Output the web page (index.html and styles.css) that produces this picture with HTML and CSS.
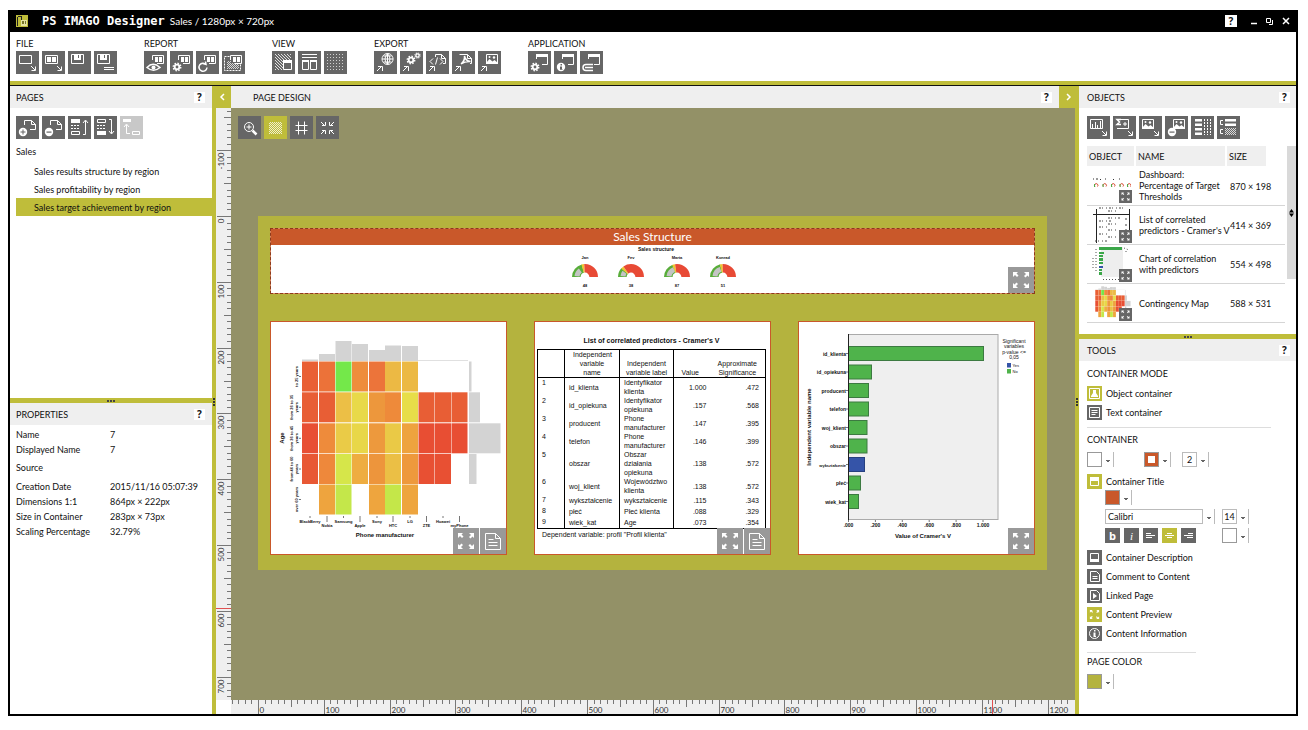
FILE: index.html
```html
<!DOCTYPE html>
<html lang="en">
<head>
<meta charset="utf-8">
<title>PS IMAGO Designer</title>
<link rel="stylesheet" href="styles.css">
</head>
<body>
<svg class="defs" aria-hidden="true">
  <symbol id="expand" viewBox="0 0 26 26"><path class="w" d="M5 5h5l-1.500 1.500 2 2-1.500 1.500-2-2L5 10zM21 5v5l-1.500-1.500-2 2-1.500-1.500 2-2L16 5zM5 21v-5l1.500 1.500 2-2 1.500 1.500-2 2L10 21zM21 21h-5l1.500-1.500-2-2 1.500-1.500 2 2L21 16z"/></symbol>
  <symbol id="note" viewBox="0 0 26 26"><path class="s" d="M5.500 5.500h10l5 5v11h-15zM15.500 5.500v5h5M8.500 11.500h5M8.500 14.500h9M8.500 17.500h9"/></symbol>
  <symbol id="in" viewBox="0 0 23 23"><path class="s" d="M15 15l4 4M19.500 15.500v4h-4"/></symbol>
  <symbol id="out" viewBox="0 0 23 23"><path class="s" d="M3 20l5-5M4 15.500h4.500V20"/></symbol>
  <symbol id="win" viewBox="0 0 23 23"><path class="s" d="M8.500 9V4.500h11v8H13"/><path class="w" d="M11 6h3v5h-3zM15 6h3v5h-3z"/></symbol>
  <symbol id="app" viewBox="0 0 23 23"><path class="s" d="M8.500 8V4.500h11v9H14"/><path class="w" d="M8 3h12v3H8z"/></symbol>
  <symbol id="gear" viewBox="0 0 10 10"><circle class="w" cx="5" cy="5" r="3.200"/><circle class="s d" cx="5" cy="5" r="3.700"/><circle class="k" cx="5" cy="5" r="1.400"/></symbol>
  <symbol id="pic" viewBox="0 0 23 23"><path class="s" d="M8.500 3.500h11v9h-11z"/><path class="w" d="M8 12l3.500-4 3 2.500 2-1.500 3.500 3v1H8z"/><circle class="w" cx="11.500" cy="6" r="1"/><circle class="w" cx="16" cy="6.500" r="1.200"/></symbol>
  <symbol id="page" viewBox="0 0 23 23"><path class="s" d="M8.500 9V4.500h7l4 4v5H14M15.500 4.500v4h4"/></symbol>
  <pattern id="hatch" width="3" height="3" patternUnits="userSpaceOnUse"><path d="M0 0l3 3" stroke="#fff" stroke-width=".8"/></pattern>
  <pattern id="check" width="2" height="2" patternUnits="userSpaceOnUse"><path d="M0 0h1v1H0zM1 1h1v1H1z" fill="#fff" opacity=".75"/></pattern>
  <pattern id="dots" width="3" height="3" patternUnits="userSpaceOnUse"><path d="M0 0h1v1H0z" fill="#fff"/></pattern>
</svg>

<div class="window">
  <header class="titlebar">
    <svg class="logo" viewBox="0 0 12 12"><path fill="#bfbd3a" d="M0 0h12v12H0z"/><path fill="#222" d="M1 2h1v9H1zM2 1h4v1H2zM5 2h1v3H5z"/><path fill="#e4e3a0" d="M5 5h6v6H5z"/><path fill="#77752a" d="M6 6h2v3H6zM9 6h1v3H9z"/></svg>
    <h1 class="brand">PS IMAGO Designer</h1>
    <span class="doc">Sales / 1280px × 720px</span>
    <button class="help">?</button>
    <div class="winbtns">
      <button aria-label="Minimize"><svg viewBox="0 0 8 8"><path class="s b" d="M1 6.500h6"/></svg></button>
      <button aria-label="Restore"><svg viewBox="0 0 8 8"><path class="s" d="M.5 1.500h4v4h-4zM6.500 3v4.500H3"/></svg></button>
      <button aria-label="Close"><svg viewBox="0 0 8 8"><path class="s b" d="M1 1l6 6M7 1L1 7"/></svg></button>
    </div>
  </header>

  <nav class="toolbar">
    <section class="group"><h2>FILE</h2><div class="icons">
      <button class="ic" aria-label="New"><svg viewBox="0 0 23 23"><path class="s" d="M3.500 4.500h12v8h-12z"/><use href="#in"/></svg></button>
      <button class="ic" aria-label="Open"><svg viewBox="0 0 23 23"><path class="s" d="M3.500 4.500h12v8h-12z"/><path class="w" d="M5 6h4v5H5zM10 6h4v5h-4z"/><use href="#in"/></svg></button>
      <button class="ic" aria-label="Save"><svg viewBox="0 0 23 23"><path class="s" d="M3.500 3.500h12v9h-12z"/><path class="w" d="M6 3h7v6H6z"/><path class="k" d="M10 4h1v3h-1z"/></svg></button>
      <button class="ic" aria-label="Save as"><svg viewBox="0 0 23 23"><path class="s" d="M3.500 3.500h12v9h-12zM10 16.500h10M10 18.500h10"/><path class="w" d="M6 3h7v6H6z"/><path class="k" d="M10 4h1v3h-1z"/></svg></button>
    </div></section>
    <section class="group"><h2>REPORT</h2><div class="icons">
      <button class="ic" aria-label="Preview"><svg viewBox="0 0 23 23"><use href="#win"/><path class="k" d="M2 16q8-8 15 0z"/><path class="s b" d="M3 16.500q6-6.500 13 0q-6.500 5.500-13 0z"/><circle class="w" cx="9.500" cy="16.500" r="2"/></svg></button>
      <button class="ic" aria-label="Report settings"><svg viewBox="0 0 23 23"><use href="#win"/><use href="#gear" x="2" y="11" width="10" height="10"/></svg></button>
      <button class="ic" aria-label="Refresh"><svg viewBox="0 0 23 23"><use href="#win"/><path class="s b" d="M10 13.500a4 4 0 1 0 1 3M7 12.500l3 1-.5-3"/></svg></button>
      <button class="ic" aria-label="Select"><svg viewBox="0 0 23 23"><path class="s dash" d="M2.500 5.500h16v14h-16z"/><path fill="url(#check)" d="M5 10h12v8H5z"/><path class="k" d="M9 5h10v7H9z"/><use href="#win"/></svg></button>
    </div></section>
    <section class="group"><h2>VIEW</h2><div class="icons">
      <button class="ic" aria-label="Background"><svg viewBox="0 0 23 23"><path fill="url(#hatch)" d="M3 3h16v16H3z"/><path class="s kf" d="M11.500 9.500h8v9h-8z"/><path class="w" d="M11 9h9v3h-9z"/></svg></button>
      <button class="ic" aria-label="Layout"><svg viewBox="0 0 23 23"><path class="s" d="M4 3.500h15M4 6.500h15M4.500 9.500h6v9h-6zM12.500 9.500h6v9h-6z"/><path class="w" d="M4 9h7v2H4zM12 9h7v2h-7z"/></svg></button>
      <button class="ic" aria-label="Grid"><svg viewBox="0 0 23 23"><path fill="url(#dots)" opacity=".7" d="M3 3h17v17H3z"/></svg></button>
    </div></section>
    <section class="group"><h2>EXPORT</h2><div class="icons">
      <button class="ic" aria-label="Export HTML"><svg viewBox="0 0 23 23"><use href="#out"/><path class="s" d="M13.500 2.500a5.500 5.500 0 1 0 .1 0zM13.500 3v10M8 8h11M9.500 5h8M9.500 11h8M13.500 2.500q-5 5.500 0 11q5-5.500 0-11"/></svg></button>
      <button class="ic" aria-label="Export settings"><svg viewBox="0 0 23 23"><use href="#out"/><use href="#gear" x="6" y="4" width="10" height="10"/><use href="#gear" x="14" y="1" width="7" height="7"/></svg></button>
      <button class="ic" aria-label="Export code"><svg viewBox="0 0 23 23"><use href="#out"/><path class="s" d="M9.500 6V3.500h6l4 4v5H17M15.500 3.500v4h4M7 7.500l-3 3 3 3M11.500 6.500l-2 7M14 7.500l3 3-3 3"/></svg></button>
      <button class="ic" aria-label="Export PDF"><svg viewBox="0 0 23 23"><use href="#out"/><path class="s" d="M7.500 3.500h8l4 4v5H18M15.500 3.500v4h4"/><path class="s b" d="M9 13q4-3 3.500-8q1 5 6 5.500q-5-.5-9.500 2.500"/></svg></button>
      <button class="ic" aria-label="Export image"><svg viewBox="0 0 23 23"><use href="#out"/><use href="#pic"/></svg></button>
    </div></section>
    <section class="group"><h2>APPLICATION</h2><div class="icons">
      <button class="ic" aria-label="Options"><svg viewBox="0 0 23 23"><use href="#app"/><use href="#gear" x="2" y="11" width="10" height="10"/></svg></button>
      <button class="ic" aria-label="About"><svg viewBox="0 0 23 23"><use href="#app"/><circle class="w" cx="7" cy="16" r="4.200"/><path class="k" d="M6.500 13h1.500v1.500H6.500zM6 15.500h2v2.500h.5v.8H6z"/></svg></button>
      <button class="ic" aria-label="Close application"><svg viewBox="0 0 23 23"><use href="#app"/><path class="s b" d="M13 13.500H6a3 3 0 0 0 0 6h7M5 16.500h8"/></svg></button>
    </div></section>
  </nav>

  <div class="body">
    <aside class="left">
      <section class="pages">
        <header class="phead"><h2>PAGES</h2><button class="help">?</button></header>
        <div class="icons pad">
          <button class="ic" aria-label="Add page"><svg viewBox="0 0 23 23"><use href="#page"/><circle class="w" cx="7" cy="16" r="4.200"/><path class="k" d="M6.500 13.500h1v2h2v1h-2v2h-1v-2h-2v-1h2z"/></svg></button>
          <button class="ic" aria-label="Remove page"><svg viewBox="0 0 23 23"><use href="#page"/><circle class="w" cx="7" cy="16" r="4.200"/><path class="k" d="M4.500 15.500h5v1.200h-5z"/></svg></button>
          <button class="ic" aria-label="Move up"><svg viewBox="0 0 23 23"><path class="w" d="M3 3h9v4H3z"/><path class="s dash" d="M3 9.500h9M3 12.500h9"/><path class="s" d="M3.500 15.500h8v3h-8zM15 18.500h2.500v-14M15 7l2.500-3L20 7"/></svg></button>
          <button class="ic" aria-label="Move down"><svg viewBox="0 0 23 23"><path class="w" d="M3 15h9v4H3z"/><path class="s dash" d="M3 9.500h9M3 12.500h9"/><path class="s" d="M3.500 3.500h8v3h-8zM15 3.500h2.500v14M15 15l2.500 3 2.500-3"/></svg></button>
          <button class="ic off" disabled aria-label="Move level"><svg viewBox="0 0 23 23"><path class="w" d="M3 3h8v3H3z"/><path class="s" d="M10 17.500H6.500V9M4 11l2.500-3L9 11M12.500 15.500h7v3h-7z"/></svg></button>
        </div>
        <ul class="tree">
          <li>Sales</li>
          <li class="sub">Sales results structure by region</li>
          <li class="sub">Sales profitability by region</li>
          <li class="sub on">Sales target achievement by region</li>
        </ul>
      </section>
      <div class="split"><i class="grip"></i></div>
      <section class="props">
        <header class="phead"><h2>PROPERTIES</h2><button class="help">?</button></header>
        <dl>
          <dt>Name</dt><dd>7</dd>
          <dt>Displayed Name</dt><dd>7</dd>
          <dt class="tall">Source</dt><dd></dd>
          <dt>Creation Date</dt><dd>2015/11/16 05:07:39</dd>
          <dt>Dimensions 1:1</dt><dd>864px × 222px</dd>
          <dt>Size in Container</dt><dd>283px × 73px</dd>
          <dt>Scaling Percentage</dt><dd>32.79%</dd>
        </dl>
      </section>
    </aside>

    <main class="center">
      <header class="phead">
        <button class="tab" aria-label="Collapse left"><svg viewBox="0 0 8 8"><path class="s b" d="M6 1L3 4l3 3"/></svg></button>
        <h2>PAGE DESIGN</h2><button class="help">?</button>
        <button class="tab" aria-label="Collapse right"><svg viewBox="0 0 8 8"><path class="s b" d="M2 1l3 3-3 3"/></svg></button>
      </header>
      <div class="work">
        <div class="vsplit"><i class="grip v"></i></div>
        <svg class="vruler"></svg>
        <div class="stagecol">
          <div class="stage">
            <div class="icons">
              <button class="ic" aria-label="Zoom"><svg viewBox="0 0 23 23"><circle class="s" cx="11" cy="11" r="4.500"/><path class="s" d="M11 8.500v5M8.500 11h5"/><path class="s bb" d="M14.500 14.500l4 4"/></svg></button>
              <button class="ic on" aria-label="Pattern"><svg viewBox="0 0 23 23"><path fill="url(#check)" d="M5 6h13v12H5z"/></svg></button>
              <button class="ic" aria-label="Snap to grid"><svg viewBox="0 0 23 23"><path class="s" d="M8.500 5.500v13M14.500 5.500v13M5.500 9.500h12M5.500 14.500h12"/></svg></button>
              <button class="ic" aria-label="Fit"><svg viewBox="0 0 23 23"><path class="s" d="M5 6l3.500 3.500M9.500 6v3.500H6M18 6l-3.500 3.500M13.500 6v3.500H17M5 18l3.500-3.500M9.500 18v-3.500H6M18 18l-3.500-3.500M13.500 18v-3.500H17"/></svg></button>
            </div>
            <div class="sheet">
              <section class="dash-card">
                <h3>Sales Structure</h3>
                <svg class="gauges" viewBox="271 245 763 48" id="gauges"></svg>
                <div class="tags"><button class="tag" aria-label="Preview"><svg><use href="#expand"/></svg></button></div>
              </section>
              <div class="cards">
                <section class="card"><svg class="chart" viewBox="271 321 235 232" id="heat"></svg>
                  <div class="tags"><button class="tag" aria-label="Preview"><svg><use href="#expand"/></svg></button><button class="tag" aria-label="Comment"><svg><use href="#note"/></svg></button></div></section>
                <section class="card tcard">
                  <table class="pred">
                    <caption>List of correlated predictors - Cramer's V</caption>
                    <thead><tr><th></th><th>Independent variable name</th><th>Independent variable label</th><th>Value</th><th>Approximate Significance</th></tr></thead>
                    <tbody>
                      <tr><td>1</td><td>id_klienta</td><td>Identyfikator klienta</td><td>1.000</td><td>.472</td></tr>
                      <tr><td>2</td><td>id_opiekuna</td><td>Identyfikator opiekuna</td><td>.157</td><td>.568</td></tr>
                      <tr><td>3</td><td>producent</td><td>Phone manufacturer</td><td>.147</td><td>.395</td></tr>
                      <tr><td>4</td><td>telefon</td><td>Phone manufacturer</td><td>.146</td><td>.399</td></tr>
                      <tr><td>5</td><td>obszar</td><td>Obszar działania opiekuna</td><td>.138</td><td>.572</td></tr>
                      <tr><td>6</td><td>woj_klient</td><td>Województwo klienta</td><td>.138</td><td>.572</td></tr>
                      <tr><td>7</td><td>wykształcenie</td><td>wykształcenie</td><td>.115</td><td>.343</td></tr>
                      <tr><td>8</td><td>płeć</td><td>Płeć klienta</td><td>.088</td><td>.329</td></tr>
                      <tr><td>9</td><td>wiek_kat</td><td>Age</td><td>.073</td><td>.354</td></tr>
                    </tbody>
                  </table>
                  <p class="foot">Dependent variable: profil "Profil klienta"</p>
                  <div class="tags"><button class="tag" aria-label="Preview"><svg><use href="#expand"/></svg></button><button class="tag" aria-label="Comment"><svg><use href="#note"/></svg></button></div></section>
                <section class="card"><svg class="chart" viewBox="798 321 235 232" id="bars"></svg>
                  <div class="tags"><button class="tag" aria-label="Preview"><svg><use href="#expand"/></svg></button></div></section>
              </div>
            </div>
          </div>
          <svg class="hruler"></svg>
        </div>
        <div class="vsplit"><i class="grip v"></i></div>
      </div>
    </main>

    <aside class="right">
      <section class="objects">
        <header class="phead"><h2>OBJECTS</h2><button class="help">?</button></header>
        <div class="icons pad">
          <button class="ic" aria-label="Add chart"><svg viewBox="0 0 23 23"><path class="s" d="M3.500 3.500h12v9h-12z"/><path class="w" d="M5 8h1v4H5zM8 6h1v6H8zM10 9h1v3h-1zM13 5h1v7h-1z"/><use href="#in"/></svg></button>
          <button class="ic" aria-label="Add statistic"><svg viewBox="0 0 23 23"><path class="s" d="M8 3.500h7.500v9H4M10 8h4M12 6v4"/><path class="s b" d="M8 3.500H4l2.500 2.500L4 8.500h4"/><use href="#in"/></svg></button>
          <button class="ic" aria-label="Add image"><svg viewBox="0 0 23 23"><use href="#pic" x="-5"/><use href="#in"/></svg></button>
          <button class="ic" aria-label="Remove image"><svg viewBox="0 0 23 23"><use href="#pic"/><circle class="w" cx="7" cy="16" r="4.200"/><path class="k" d="M4.500 15.500h5v1.200h-5z"/></svg></button>
          <button class="ic" aria-label="List view"><svg viewBox="0 0 23 23"><path class="w" d="M4 3h7v2.500H4zM4 7.500h7V10H4zM4 12h7v2.500H4zM4 16.500h7V19H4z"/><path class="s dash" d="M13.500 3v16M16.500 3v16M19.500 3v16"/></svg></button>
          <button class="ic" aria-label="Group view"><svg viewBox="0 0 23 23"><path class="w" d="M8 3h11v2.500H8zM8 7.500h11V10H8z"/><path class="s" d="M6 4.500H3.500v4H6M6 13.500H3.500v4H6"/><path fill="url(#check)" d="M8 12h11v7H8z"/></svg></button>
        </div>
        <div class="list">
          <table class="objs">
            <thead><tr><th>OBJECT</th><th>NAME</th><th>SIZE</th><th></th></tr></thead>
            <tbody>
              <tr><td><div class="thumb"><svg viewBox="0 0 40 36"><path d="M2 12h1M5 12h2M9 12.500h1M14 12h1M22 12.500h1M28 12h1" stroke="#333"/><g fill="none" stroke="#d84a30"><path d="M4 19.500a1.700 1.700 0 1 1 2.500 0M12.500 19.500a1.700 1.700 0 1 1 2.500 0M21 19.500a1.700 1.700 0 1 1 2.500 0M29.500 19.500a1.700 1.700 0 1 1 2.500 0M37 19.500a1.700 1.700 0 1 1 2.500 0"/></g><path d="M3.500 17v3M12 17v3M20.500 17v3M29 17v3M36.500 17v3" stroke="#4bae46"/></svg><button class="mini" aria-label="Preview"><svg><use href="#expand"/></svg></button></div></td><td>Dashboard:<br>Percentage of Target<br>Thresholds</td><td>870 × 198</td><td></td></tr>
              <tr><td><div class="thumb"><svg viewBox="0 0 40 36"><path d="M5.500 2v34M38.500 2v26M2 7.500h37" stroke="#222"/><g stroke="#444" stroke-dasharray="2 1 1 3 1 2"><path d="M8 1h24M17 4h9M17 11h13M8 14h12M17 17h8M8 20h10M17 23h8M8 27h10M17 30h9M4 34h12M34 12h3M34 18h3M34 23h3"/></g></svg><button class="mini" aria-label="Preview"><svg><use href="#expand"/></svg></button></div></td><td>List of correlated<br>predictors - Cramer's V</td><td>414 × 369</td><td></td></tr>
              <tr><td><div class="thumb"><svg viewBox="0 0 40 36"><path fill="#eee" d="M10 1h22v30H10z"/><path fill="#3aa648" d="M8 1h23v3H8zM8 6h5v2H8zM8 9h4v2H8zM8 12h4v3H8zM8 16h4v2H8zM8 23h3v2H8zM8 26h3v3H8z"/><path fill="#3554a8" d="M8 20h4v2H8z"/><path stroke="#555" stroke-dasharray="1 2" d="M2 12v10M5 3v24M12 33.500h18M33 2l5 2M35 5v3"/></svg><button class="mini" aria-label="Preview"><svg><use href="#expand"/></svg></button></div></td><td>Chart of correlation<br>with predictors</td><td>554 × 498</td><td></td></tr>
              <tr><td><div class="thumb"><svg viewBox="278 334 225 200" id="heatThumb"></svg><button class="mini" aria-label="Preview"><svg><use href="#expand"/></svg></button></div></td><td>Contingency Map</td><td>588 × 531</td><td></td></tr>
            </tbody>
          </table>
          <div class="bar"><div class="knob"><svg viewBox="0 0 5 8"><path d="M0 3.500L2.500 0 5 3.500zM0 4.500h5L2.500 8z"/></svg></div></div>
        </div>
      </section>
      <div class="split"><i class="grip"></i></div>
      <section class="tools">
        <header class="phead"><h2>TOOLS</h2><button class="help">?</button></header>
        <div class="tbody">
          <h3>CONTAINER MODE</h3>
          <button class="row"><span class="sq on"><svg viewBox="0 0 15 15"><path class="s" d="M2.500 2.500h10v10h-10z"/><path class="w" d="M6 4h3v3l2 3v1H4v-1l2-3z"/></svg></span>Object container</button>
          <button class="row"><span class="sq"><svg viewBox="0 0 15 15"><path class="s" d="M2.500 2.500h10v10h-10zM4.500 5.500h6M4.500 7.500h6M4.500 9.500h4"/></svg></span>Text container</button>
          <hr>
          <h3>CONTAINER</h3>
          <div class="line">
            <button class="sw white" aria-label="Fill"></button><i class="caret"></i>
            <button class="sw border-sw" aria-label="Border color"></button><i class="caret"></i>
            <select class="num" aria-label="Border width"><option>2</option></select><i class="caret"></i>
          </div>
          <button class="row"><span class="sq on"><svg viewBox="0 0 15 15"><path class="s" d="M3.500 3.500h8v8h-8z"/><path class="w" d="M3 3h9v4H3z"/></svg></span>Container Title</button>
          <div class="line in"><button class="sw orange" aria-label="Title color"></button><i class="caret"></i></div>
          <div class="line in font"><select class="face" aria-label="Font"><option>Calibri</option></select><i class="caret"></i><select class="num" aria-label="Font size"><option>14</option></select><i class="caret"></i></div>
          <div class="line in fmt">
            <button class="sq b">b</button><button class="sq i">i</button>
            <button class="sq" aria-label="Left"><svg viewBox="0 0 15 15"><path class="s" d="M3 5.500h5M3 7.500h9M3 9.500h6"/></svg></button>
            <button class="sq on" aria-label="Center"><svg viewBox="0 0 15 15"><path class="s" d="M5 5.500h5M3 7.500h9M5 9.500h5"/></svg></button>
            <button class="sq" aria-label="Right"><svg viewBox="0 0 15 15"><path class="s" d="M7 5.500h5M3 7.500h9M6 9.500h6"/></svg></button>
            <button class="sw white" aria-label="Text color"></button><i class="caret"></i>
          </div>
          <button class="row"><span class="sq"><svg viewBox="0 0 15 15"><path class="s" d="M3.500 3.500h8v8h-8z"/><path class="w" d="M3 9h9v3H3z"/></svg></span>Container Description</button>
          <button class="row"><span class="sq"><svg viewBox="0 0 15 15"><path class="s" d="M3.500 2.500h6l3 3v7h-9zM5.500 7.500h5M5.500 9.500h5"/></svg></span>Comment to Content</button>
          <button class="row"><span class="sq"><svg viewBox="0 0 15 15"><path class="s" d="M3.500 2.500h6l3 3v7h-9z"/><path class="w" d="M6 5l4 3-4 3z"/></svg></span>Linked Page</button>
          <button class="row"><span class="sq on"><svg><use href="#expand"/></svg></span>Content Preview</button>
          <button class="row"><span class="sq"><svg viewBox="0 0 15 15"><circle class="s" cx="7.500" cy="7.500" r="5"/><path class="w" d="M7 4h1.500v1.500H7zM6.500 6.500h2V10H9v1H6.500z"/></svg></span>Content Information</button>
          <hr class="short">
          <h3>PAGE COLOR</h3>
          <div class="line"><button class="sw olive" aria-label="Page color"></button><i class="caret"></i></div>
        </div>
      </section>
    </aside>
  </div>
</div>
<script src="script.js"></script>
</body>
</html>
```
FILE: styles.css
```css
* { box-sizing: border-box; margin: 0; padding: 0; }
body { background: #fff; color: #111; font: 9px/12px "Lato", sans-serif; }
button, select { font: inherit; color: inherit; background: none; border: 0; appearance: none; }
h1, h2, h3 { font: inherit; }
ul { list-style: none; }
svg { display: block; width: 100%; height: 100%; }
.defs { position: absolute; width: 0; height: 0; }

.w { fill: #fff; }
.k { fill: #666; }
.s { fill: none; stroke: #fff; stroke-width: 1; }
.kf { fill: #666; }
.b { stroke-width: 1.5; }
.bb { stroke-width: 2.5; }
.d { stroke-width: 1.5; stroke-dasharray: 1.5 1.4; }
.dash { stroke-dasharray: 2 1; }

.window { display: flex; flex-direction: column; min-height: calc(100vh - 24px); margin: 10px 10px 14px 8px; border: solid #000; border-width: 0 2px 2px; }
.titlebar { display: flex; align-items: center; height: 22px; margin: 0 -2px; padding: 0 8px; background: #000; color: #fff; }
.logo { width: 12px; height: 12px; }
.brand { margin: 0 5px 0 14px; font: bold 12px/16px "DejaVu Sans Mono", monospace; }
.doc { font-size: 10px; }
.help { width: 11px; height: 11px; background: #fff; color: #111; font: bold 10px/11px "Open Sans", sans-serif; text-align: center; }
.titlebar .help { width: 12px; height: 12px; margin-left: auto; }
.winbtns { display: flex; gap: 8px; margin-left: 13px; }
.winbtns button { width: 8px; height: 8px; }

.toolbar { display: flex; gap: 27px; padding: 5px 6px 6px; border-bottom: 1px solid #111; box-shadow: inset 0 -4px #bfbd3a; height: 54px; }
.group h2 { line-height: 14px; white-space: nowrap; }
.icons { display: flex; gap: 3px; }
.ic { flex: none; width: 23px; height: 23px; background: #666; }
.ic.on { background: #bfbd3a; }
.ic.off { background: #c8c8c8; }
.icons.pad { padding: 8px 6px; }

.body { flex: 1; display: flex; }
.left { flex: 0 0 202px; display: flex; flex-direction: column; }
.center { flex: 1; min-width: 0; display: flex; flex-direction: column; }
.right { flex: 0 0 217px; display: flex; flex-direction: column; }
.phead { display: flex; align-items: center; height: 22px; flex: none; padding: 0 7px 0 6px; background: #efefef; }
.phead h2 { padding-top: 2px; }
.phead .help { margin-left: auto; }
.right .phead { padding: 0 6px 0 8px; }
.right .icons.pad { padding: 8px; }
.pages { flex: 1; }
.props { height: 311px; }
.split, .vsplit { flex: none; display: flex; align-items: center; justify-content: center; background: #bfbd3a; }
.split { height: 5px; }
.vsplit { width: 4px; }
.grip { width: 8px; height: 2px; background: repeating-linear-gradient(90deg, #444 0 2px, transparent 2px 3px); }
.grip.v { width: 2px; height: 8px; margin-bottom: 18px; background: repeating-linear-gradient(#333 0 2px, transparent 2px 3px); }

.tree li { margin-left: 6px; line-height: 17px; }
.tree .sub { height: 18px; padding-left: 18px; line-height: 19px; }
.tree li:first-child { height: 19px; margin-top: -4px; }
.tree .on { background: #bfbd3a; }
.props dl { display: grid; grid-template-columns: 94px 1fr; padding: 2px 6px; line-height: 15px; }
.props .tall { line-height: 22px; }

.center .phead { padding: 0; }
.center h2 { margin-left: 22px; }
.tab { display: flex; align-items: center; justify-content: center; width: 19px; height: 22px; background: #bfbd3a; }
.tab svg { width: 8px; height: 8px; }
.center .help + .tab { width: 20px; margin-left: 7px; }
.work { flex: 1; display: flex; }
.vruler { flex: none; width: 15px; height: auto; margin-bottom: 14px; background: #efefef; }
.hruler { flex: none; height: 14px; background: #efefef; }
.tick { stroke: #777; stroke-width: 1; }
.mark { stroke: #e05050; stroke-width: 1; }
.rlabel { font-size: 8px; fill: #333; }
.stagecol { flex: 1; min-width: 0; display: flex; flex-direction: column; }
.stage { flex: 1; padding: 8px 7px; background: #939167; }
.sheet { margin: 77px 21px 0 20px; padding: 12px; background: #b4b33e; }
.dash-card { position: relative; border: 1px dashed #8c3a1c; background: #d9875f; }
.dash-card h3 { height: 16px; background: #c9582a; color: #fff; font-size: 12px; line-height: 16px; text-align: center; }
.gauges { height: auto; background: #fff; }
.cards { display: grid; grid-template-columns: repeat(3, 1fr); gap: 27px; padding: 27px 0 3px; }
.card { position: relative; min-width: 0; border: 1px solid #c9582a; background: #fff; }
.chart { height: auto; }
.tags { position: absolute; right: 0; bottom: 0; display: flex; gap: 1px; }
.tag { width: 26px; height: 26px; background: #999; }
.gauges text, .chart text { font-family: "Liberation Sans", sans-serif; fill: #111; }

.tcard { padding: 14px 4px 0 2px; font: 7px/9px "Liberation Sans", sans-serif; }
.pred { width: 100%; border-collapse: collapse; table-layout: fixed; border: 1px solid #000; }
.pred caption { padding-bottom: 4px; font-weight: bold; }
.pred th, .pred td { padding: 0 4px; font-weight: normal; border-right: 1px solid #000; text-align: left; }
.pred th { height: 28px; padding: 0 8px; vertical-align: bottom; text-align: center; border-bottom: 1px solid #000; }
.pred td { height: 11px; }
.pred th:nth-child(1) { width: 27px; }
.pred th:nth-child(2) { width: 55px; }
.pred th:nth-child(3) { width: 54px; padding: 0 2px; }
.pred th:nth-child(4) { width: 36px; }
.pred td:nth-child(1) { vertical-align: top; }
.pred td:nth-child(n+4) { text-align: right; padding-right: 6px; }
.pred th:nth-child(4), .pred td:nth-child(4) { border-right: 0; padding-left: 0; padding-right: 3px; }
.foot { padding: 1px 5px 0; white-space: nowrap; }

.list { display: flex; }
.objs { flex: 1; border-collapse: collapse; table-layout: fixed; width: 100%; margin: -1px 1px 0 8px; }
.objs th { height: 20px; padding: 2px 0 0 2px; background: #efefef; border-right: 2px solid #fff; font-weight: normal; text-align: left; }
.objs th:nth-child(1) { width: 48px; }
.objs th:nth-child(2) { width: 91px; }
.objs th:nth-child(3) { width: 41px; }
.objs th:nth-child(4) { background: #fff; }
.objs td { height: 39px; border-bottom: 1px solid #d5d5d5; line-height: 11px; white-space: nowrap; }
.objs td:nth-child(2) { padding-top: 1px; padding-left: 4px; }
.objs td:nth-child(3) { padding-top: 2px; padding-left: 4px; }
.thumb { position: relative; width: 40px; height: 36px; margin-left: 4px; }
.mini { position: absolute; right: -1px; bottom: 0; width: 13px; height: 13px; background: #666; }
.bar { width: 9px; margin-top: -1px; }
.knob { display: flex; align-items: center; height: 133px; padding: 0 2px; background: #d9d9d9; }
.knob svg { height: 8px; }
.objects { flex: 1; }

.tools { height: 375px; }
.tbody { padding: 7px 8px; }
.tbody h3 { margin-bottom: 6px; }
.row { display: flex; align-items: center; gap: 4px; height: 15px; margin-bottom: 4px; }
.sq { flex: none; width: 15px; height: 15px; background: #666; color: #fff; }
.sq.on { background: #bfbd3a; }
.sq.b { font: bold 11px/14px "Open Sans", sans-serif; }
.sq.i { font: italic 11px/14px "Liberation Serif", serif; }
hr { width: 184px; margin: 7px 0 6px; border: 0; border-top: 1px solid #ddd; }
hr.short { width: 109px; margin: 11px 0 3px; }
.line { display: flex; align-items: center; height: 15px; margin-bottom: 7px; }
.line.in { margin: -3px 0 4px 18px; }
.line.font { margin-top: 0; }
.line.fmt { margin: 0 0 7px 18px; gap: 4px; }
.sw { width: 15px; height: 15px; border: 1px solid #999; }
.caret { width: 12px; height: 15px; border-right: 1px solid #bbb; background: linear-gradient(#666, #666) 4px 8px / 4px 1px no-repeat, linear-gradient(#666, #666) 5px 9px / 2px 1px no-repeat; }
.border-sw { margin-left: 30px; border: 4px solid #c9582a; outline: 1px solid #999; outline-offset: -1px; background: #fff; }
.orange { background: #c9582a; }
.olive { background: #b4b33e; }
.num { width: 15px; height: 15px; margin-left: 11px; border: 1px solid #bbb; text-align: center; line-height: 13px; }
.face { width: 98px; height: 15px; padding-left: 2px; border: 1px solid #bbb; }
.font .num { margin-left: 7px; }
.fmt .sw { margin-left: 22px; }
.fmt .caret { margin-left: -4px; }
```
FILE: script.js
```javascript
const NS = "http://www.w3.org/2000/svg";
function add(parent, tag, attrs, text) {
  const el = document.createElementNS(NS, tag);
  for (const k in attrs) el.setAttribute(k, attrs[k]);
  if (text) el.textContent = text;
  parent.appendChild(el);
  return el;
}
const $ = (s) => document.querySelector(s);

// Rulers: 100 page units take 65.8 screen pixels
const STEP = 6.58;
function ruler(svg, vertical, zero, from, to) {
  for (let i = from; i <= to; i++) {
    const p = Math.round(zero + i * STEP) + 0.5;
    const len = i % 10 === 0 ? 14 : i % 5 === 0 ? 7 : 4;
    add(svg, "line", vertical
      ? { class: "tick", x1: 15 - len, x2: 15, y1: p, y2: p }
      : { class: "tick", x1: p, x2: p, y1: 0, y2: len });
    if (i % 10 === 0) {
      add(svg, "text", vertical
        ? { class: "rlabel", "text-anchor": "end", transform: `translate(8 ${p + 2}) rotate(-90)` }
        : { class: "rlabel", x: p + 1, y: 13 }, String(i * 10));
    }
  }
}
ruler($(".vruler"), true, 108, -16, 73);
ruler($(".hruler"), false, 27, -4, 123);
add($(".vruler"), "line", { class: "mark", x1: 0, x2: 15, y1: 500.5, y2: 500.5 });
add($(".hruler"), "line", { class: "mark", x1: 761.5, x2: 761.5, y1: 0, y2: 14 });

// Gauges
const g = $("#gauges");
add(g, "text", { x: 656, y: 251, "font-size": 5, "font-weight": "bold", "text-anchor": "middle" }, "Sales structure");
[[585, "Jan", "48", 48, 30], [631, "Fev", "38", 30, 20], [677, "Marta", "87", 45, 38], [723, "Konrad", "51", 49, 40]].forEach(([x, name, val, red, gray]) => {
  const arc = (r, w, a, b, c) => add(g, "path", { d: `M${x - r} 277a${r} ${r} 0 0 1 ${2 * r} 0`, fill: "none", stroke: c, "stroke-width": w, pathLength: 100, "stroke-dasharray": `0 ${a} ${b - a} 100` });
  arc(8.7, 8.6, 0, red - 6, "#58ad3a");
  arc(8.7, 8.6, red - 7, red, "#eec52f");
  arc(8, 5, 3, gray, "#c4c4c4");
  arc(8.7, 8.6, red, 100, "#e84a35");
  add(g, "text", { x, y: 259, "font-size": 4, "font-weight": "bold", "text-anchor": "middle" }, name);
  add(g, "text", { x, y: 287, "font-size": 4, "font-weight": "bold", "text-anchor": "middle" }, val);
});

// Contingency map
const X = [302, 319, 335.5, 352, 369, 385, 402, 418.5, 435, 451.5];
const Y = [360.5, 391.3, 422.3, 453, 483.5];
const ROWS = [
  ["#e95f34", "#ec7239", "#74e84a", "#ee8d3c", "#ec743a", "#ecb944", "#ecb944"],
  ["#e85e35", "#e85e35", "#ecbf46", "#e8d949", "#ed973c", "#ee8a3a", "#e7de49", "#e85e35", "#e85e35", "#e85e35"],
  ["#e84f34", "#ee8b3b", "#eacb47", "#e8d748", "#ed993d", "#eac946", "#eea33e", "#e84e33", "#e84e33", "#e84e33"],
  ["#e85834", "#ee883b", "#d6e64a", "#eead41", "#ed953c", "#ebbf45", "#ee993c", "#e85033", "#e85033"],
  ["", "#eea43e", "#c4e74a", "", "#eea53e", "#c4e749", "#eea53e"]
];
function heat(svg) {
  ROWS.forEach((r, j) => r.forEach((c, i) => c && add(svg, "rect", { x: X[i], y: Y[j], width: 16, height: 30, fill: c })));
  [1.500, 7, 20, 17, 11, 15.500, 15].forEach((h, i) => add(svg, "rect", { x: X[i], y: 360 - h, width: 16, height: h, fill: "#d3d3d3" }));
  add(svg, "rect", { x: 418, y: 359, width: 50, height: 0.7, fill: "#d3d3d3" });
  [2.500, 11, 31.500, 7.500].forEach((w, i) => add(svg, "rect", { x: 469, y: Y[i], width: w, height: 30, fill: "#d3d3d3" }));
}
heat($("#heat"));
heat($("#heatThumb"));
const h = $("#heat");
["BlackBerry", "Nokia", "Samsung", "Apple", "Sony", "HTC", "LG", "ZTE", "Huawei", "myPhone"].forEach((n, i) => {
  add(h, "line", { class: "tick", x1: X[i] + 8, x2: X[i] + 8, y1: 515, y2: i % 2 ? 521 : 517 });
  add(h, "text", { x: X[i] + 8, y: i % 2 ? 526 : 521.500, "font-size": 4, "font-weight": "bold", "text-anchor": "middle" }, n);
});
["to 25 years", "from 26 to 35 years", "from 36 to 45 years", "from 46 to 60 years", "over 60 years"].forEach((n, j) => {
  const y = Y[j] + 15;
  const parts = j > 0 && j < 4 ? [n.replace(" years", ""), "years"] : [n];
  parts.forEach((t, k) => add(h, "text", { "font-size": 4, "font-weight": "bold", "text-anchor": "middle", transform: `translate(${298 - (parts.length - 1 - k) * 5} ${y}) rotate(-90)` }, t));
  add(h, "line", { class: "tick", x1: 299, x2: 301, y1: y, y2: y });
});
add(h, "text", { x: 385, y: 536, "font-size": 6, "font-weight": "bold", "text-anchor": "middle" }, "Phone manufacturer");
add(h, "text", { "font-size": 6, "font-weight": "bold", "text-anchor": "middle", transform: "translate(284 437) rotate(-90)" }, "Age");

// Bar chart
const b = $("#bars");
add(b, "rect", { x: 847.5, y: 333.5, width: 149.5, height: 185, fill: "#efefef", stroke: "#aaa" });
[["id_klienta", 135], ["id_opiekuna", 23], ["producent", 20], ["telefon", 20], ["woj_klient", 18.500], ["obszar", 18.500], ["wykształcenie", 16], ["płeć", 12], ["wiek_kat", 10]].forEach(([n, w], i) => {
  const y = 345.5 + i * 18.5;
  add(b, "rect", { x: 847.5, y, width: w, height: 14, fill: i === 6 ? "#3554a8" : "#4fb34b", stroke: i === 6 ? "#27407f" : "#3c7a41" });
  add(b, "text", { x: 845, y: y + 9, "font-size": i === 6 ? 4 : 5, "font-weight": "bold", "text-anchor": "end" }, n);
  add(b, "line", { class: "tick", x1: 845, x2: 847, y1: y + 7, y2: y + 7 });
});
add(b, "line", { x1: 847.5, x2: 847.5, y1: 333, y2: 521, stroke: "#222" });
[".000", ".200", ".400", ".600", ".800", "1.000"].forEach((t, i) => {
  add(b, "line", { class: "tick", x1: 847.5 + i * 26.9, x2: 847.5 + i * 26.9, y1: 519, y2: 521 });
  add(b, "text", { x: 847.5 + i * 26.9, y: 526, "font-size": 5, "font-weight": "bold", "text-anchor": "middle" }, t);
});
add(b, "text", { x: 922, y: 536.5, "font-size": 6, "font-weight": "bold", "text-anchor": "middle" }, "Value of Cramer's V");
add(b, "text", { "font-size": 6, "font-weight": "bold", "text-anchor": "middle", transform: "translate(810 426) rotate(-90)" }, "Independent variable name");
["Significant", "variables", "p-value <=", "0,05"].forEach((t, i) => add(b, "text", { x: 1013, y: 341.5 + i * 5.5, "font-size": 5, "text-anchor": "middle" }, t));
add(b, "rect", { x: 1006, y: 362, width: 4, height: 4.5, fill: "#3554a8" });
add(b, "rect", { x: 1006, y: 368, width: 4, height: 4.5, fill: "#4fb34b" });
add(b, "text", { x: 1011.5, y: 366, "font-size": 4 }, "Yes");
add(b, "text", { x: 1011.5, y: 372, "font-size": 4 }, "No");
```
